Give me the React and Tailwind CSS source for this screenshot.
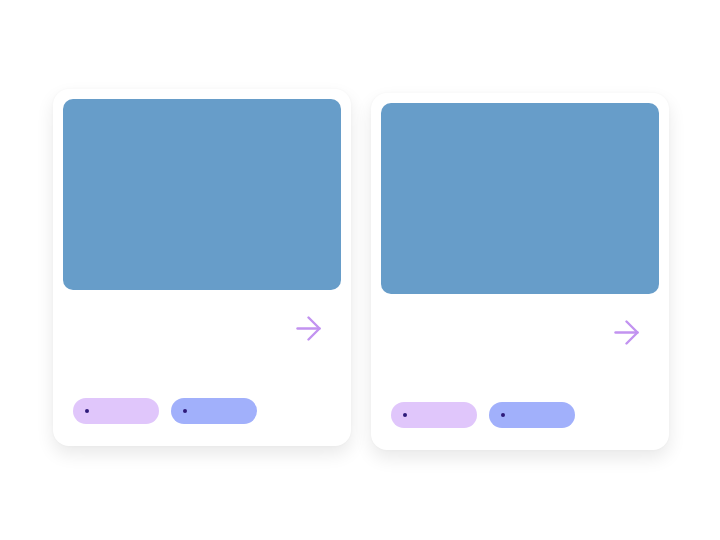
import React from "react";

function Arrow() {
  return (
    <svg width="25" height="25" viewBox="0 0 25 25" fill="none" stroke="#c293f0" strokeWidth="2.4" strokeLinecap="round" strokeLinejoin="round">
      <path d="M1.5 12.5h22" />
      <path d="M12.5 1.5l11 11-11 11" />
    </svg>
  );
}

function Pill({ bg }) {
  return (
    <div className={`h-[26px] w-[86px] rounded-full flex items-center pl-[12px] ${bg}`}>
      <div className="w-[4px] h-[4px] rounded-full bg-[#2e1a7a]" />
    </div>
  );
}

function Card({ extra }) {
  return (
    <div className={`w-[298px] bg-white rounded-2xl p-[10px] flex flex-col shadow-[0_8px_18px_rgba(0,0,0,0.09),0_0_3px_rgba(0,0,0,0.03)] ${extra}`}>
      <div className="h-[191px] rounded-[10px] bg-[#679dc9]" />
      <div className="flex justify-end mt-[26px] pr-[20px]">
        <Arrow />
      </div>
      <div className="flex gap-[12px] mt-[57px] pl-[10px] pb-[12px]">
        <Pill bg="bg-[#e0c6fb]" />
        <Pill bg="bg-[#a1b0fb]" />
      </div>
    </div>
  );
}

export default function App() {
  return (
    <div className="w-[720px] h-[540px] bg-white flex justify-start items-start pt-[89px] pl-[53px] gap-[20px] font-['Inter',sans-serif]">
      <Card extra="" />
      <Card extra="mt-[4px]" />
    </div>
  );
}
